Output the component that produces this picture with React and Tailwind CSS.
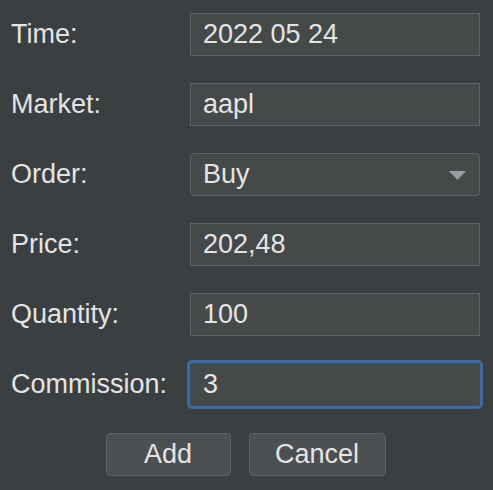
import React, { useState } from 'react';

const fields = [
  { key: 'time', label: 'Time:', value: '2022 05 24' },
  { key: 'market', label: 'Market:', value: 'aapl' },
  { key: 'order', label: 'Order:', value: 'Buy', select: true },
  { key: 'price', label: 'Price:', value: '202,48' },
  { key: 'quantity', label: 'Quantity:', value: '100' },
  { key: 'commission', label: 'Commission:', value: '3', focused: true },
];

const OrderForm = () => {
  const [values, setValues] = useState(
    Object.fromEntries(fields.map((f) => [f.key, f.value]))
  );

  const update = (key) => (e) => setValues((prev) => ({ ...prev, [key]: e.target.value }));

  return (
    <div
      className="w-[493px] h-[490px] bg-[#3c3f41] text-[#e4e4e4] text-[27px] leading-none pt-[13px] pl-[11px] pr-[13px]"
      style={{ fontFamily: '"Liberation Sans", Arial, sans-serif' }}
    >
      <div className="grid grid-cols-[179px_290px] gap-y-[27px]">
        {fields.map((f) => (
          <React.Fragment key={f.key}>
            <label className="flex items-center h-[43px]">{f.label}</label>
            {f.select ? (
              <div className="relative h-[43px] flex items-center bg-[#45494a] border border-[#5f6264] rounded-[4px] pl-[12px]">
                <span>{values[f.key]}</span>
                <svg
                  className="absolute right-[13px] top-[17px]"
                  width="17"
                  height="9"
                  viewBox="0 0 17 9"
                >
                  <polygon points="0,0 17,0 8.5,9" fill="#9b9da0" />
                </svg>
              </div>
            ) : (
              <input
                value={values[f.key]}
                onChange={update(f.key)}
                className={`h-[43px] w-full bg-[#45494a] border pl-[12px] text-[#e4e4e4] ${
                  f.focused
                    ? 'border-[#2d5276] outline-[3px] outline-solid outline-[#41699a] rounded-[2px]'
                    : 'border-[#5f6264] outline-none'
                }`}
              />
            )}
          </React.Fragment>
        ))}
      </div>

      <div className="flex justify-center gap-[18px] mt-[27px]">
        <button className="w-[125px] h-[43px] bg-[#4c5052] border border-[#5f6264] rounded-[4px] text-[#e4e4e4]">
          Add
        </button>
        <button className="w-[137px] h-[43px] bg-[#4c5052] border border-[#5f6264] rounded-[4px] text-[#e4e4e4]">
          Cancel
        </button>
      </div>
    </div>
  );
};

export default function App() {
  return <OrderForm />;
}
